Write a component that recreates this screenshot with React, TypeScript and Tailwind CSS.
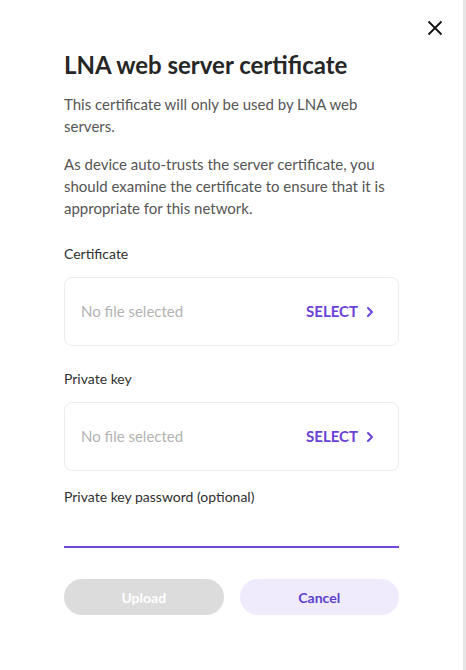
import { useState } from "react";

// Fila de selección de archivo: texto gris a la izquierda, SELECT morado a la derecha.
function FilePicker({ label }: { label: string }) {
  return (
    <div>
      <p className="text-[14px] leading-5 text-[#2f2f2f]">{label}</p>
      <div className="mt-[13px] flex h-[69px] items-center justify-between rounded-[8px] border border-[#ececec] pl-[16px] pr-[24px]">
        <span className="text-[15px] text-[#b3b3b3]">No file selected</span>
        <button className="flex items-center gap-[8px] text-[15px] font-bold text-[#6a42d6]">
          SELECT
          <svg width="8" height="12" viewBox="0 0 8 12" fill="none">
            <path d="M2 2l4 4-4 4" stroke="#6a42d6" strokeWidth="2" strokeLinecap="round" strokeLinejoin="round" />
          </svg>
        </button>
      </div>
    </div>
  );
}

export default function App() {
  const [password, setPassword] = useState("");

  return (
    <div
      className="relative h-[670px] w-[466px] border-r-[3px] border-[#e6e6e6] bg-white"
      style={{ fontFamily: "Lato, 'Noto Sans', sans-serif" }}
    >
      <button className="absolute right-[20px] top-[20px] p-0" aria-label="Close">
        <svg width="16" height="16" viewBox="0 0 16 16">
          <path d="M1.5 1.5l13 13M14.5 1.5l-13 13" stroke="#111" strokeWidth="1.8" />
        </svg>
      </button>

      <div className="px-[64px] pt-[49px]">
        <h1 className="text-[24px] font-bold leading-8 text-[#262626]">LNA web server certificate</h1>

        <p className="mt-[12px] text-[15px] leading-[22px] text-[#555]">
          This certificate will only be used by LNA web
          <br />
          servers.
        </p>
        <p className="mt-[16px] text-[15px] leading-[22px] text-[#555]">
          As device auto-trusts the server certificate, you
          <br />
          should examine the certificate to ensure that it is
          <br />
          appropriate for this network.
        </p>

        <div className="mt-[25px]">
          <FilePicker label="Certificate" />
        </div>
        <div className="mt-[23px]">
          <FilePicker label="Private key" />
        </div>

        <div className="mt-[16px]">
          <p className="text-[14px] leading-5 text-[#2f2f2f]">Private key password (optional)</p>
          <input
            type="password"
            value={password}
            onChange={(e) => setPassword(e.target.value)}
            className="mt-[11px] h-[30px] w-full border-b-2 border-[#7048d8] bg-transparent outline-none"
          />
        </div>

        <div className="mt-[31px] flex gap-[16px]">
          <button className="h-[36px] flex-1 rounded-full bg-[#dcdcdd] text-[14px] font-bold text-white">
            Upload
          </button>
          <button className="h-[36px] flex-1 rounded-full bg-[#efeafc] text-[14px] font-bold text-[#5a3fd0]">
            Cancel
          </button>
        </div>
      </div>
    </div>
  );
}
